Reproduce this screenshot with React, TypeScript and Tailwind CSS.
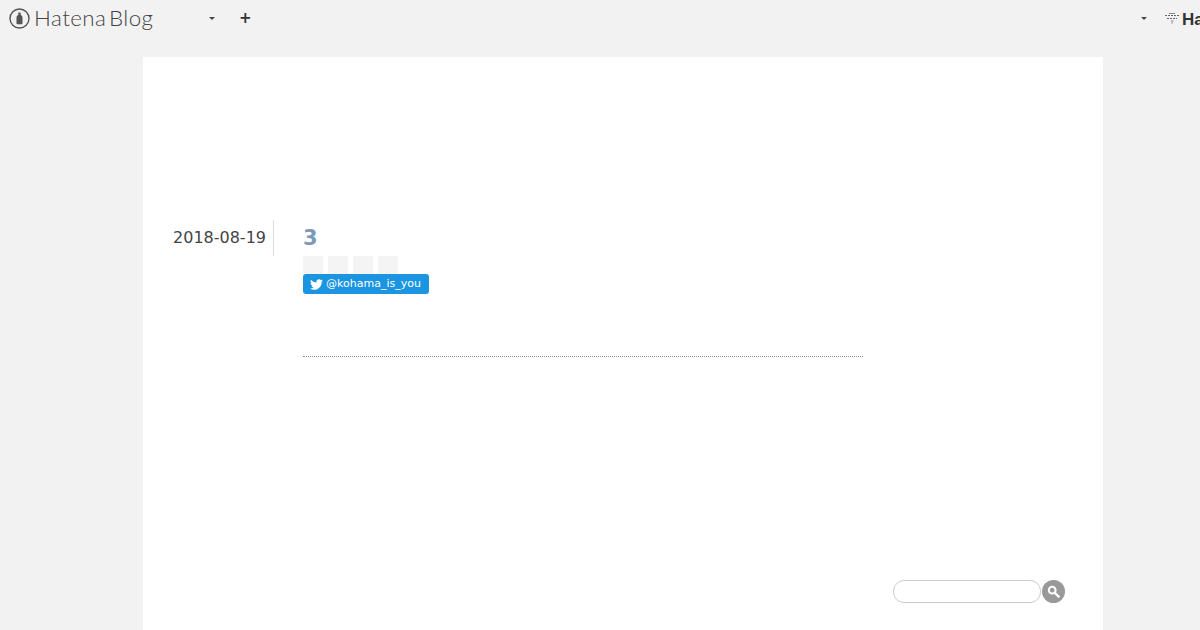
import React from 'react';
import { FaTwitter } from 'react-icons/fa';

const STAR_SLOTS = [0, 1, 2, 3];

function HatenaMark() {
  return (
    <svg width="21" height="21" viewBox="0 0 21 21" className="shrink-0">
      <circle cx="10.5" cy="10.5" r="9.5" fill="none" stroke="#555" strokeWidth="1.4" />
      <path d="M9.3 4.5h2.4v2.2c1.2.8 1.8 1.8 1.8 3v5.8c0 .4-.3.7-.7.7H8.2c-.4 0-.7-.3-.7-.7V9.7c0-1.2.6-2.2 1.8-3z" fill="#555" />
    </svg>
  );
}

function HatenaWave() {
  return (
    <svg width="16" height="12" viewBox="0 0 16 12" className="shrink-0">
      <g stroke="#666" strokeWidth="1" strokeDasharray="2 1" fill="none">
        <path d="M1 3.5h14" />
        <path d="M3 6.5h10" />
      </g>
      <path d="M5 1.5h6M7 9h2.5M7.5 11h1.5" stroke="#888" strokeWidth="1" />
    </svg>
  );
}

function TopBar() {
  return (
    <div className="flex h-[57px] items-start overflow-hidden pt-[8px] pl-[9px]">
      <HatenaMark />
      <span className="ml-[4px] w-[175px] font-['Lato','Liberation_Sans',sans-serif] text-[22.4px] leading-[20px] font-light tracking-[0.45px] text-[#444] [word-spacing:-4px]">
        Hatena Blog
      </span>
      <span className="mt-[9px] h-0 w-0 border-x-[3px] border-t-[3px] border-x-transparent border-t-[#444]" />
      <span className="mt-[-1px] ml-[24px] font-['DejaVu_Sans',sans-serif] text-[15px] leading-[22px] font-bold text-[#333]">+</span>
      <div className="ml-auto flex shrink-0 items-start">
        <span className="mt-[9px] h-0 w-0 border-x-[3px] border-t-[3px] border-x-transparent border-t-[#444]" />
        <span className="mt-[4px] ml-[17px]"><HatenaWave /></span>
        <span className="ml-[2px] w-[18px] overflow-hidden font-['Liberation_Sans',sans-serif] text-[17px] leading-[24px] font-bold whitespace-nowrap text-[#333]">
          Hatena
        </span>
      </div>
    </div>
  );
}

function Entry() {
  return (
    <div className="flex pl-[30px]">
      <div className="flex h-[36px] w-[101px] items-center justify-end border-r border-[#ddd] pr-[7px] text-[16px] whitespace-nowrap text-[#444]">
        2018-08-19
      </div>
      <div className="ml-[29px] w-[560px]">
        <div className="h-[36px] text-[21px] leading-[36px] font-bold text-[#7c9ab8]">3</div>
        <div className="flex gap-[5px]">
          {STAR_SLOTS.map((i) => (
            <span key={i} className="h-[18px] w-[20px] bg-[#f4f4f4]" />
          ))}
        </div>
        <div className="flex h-[20px] w-[126px] items-center rounded-[3px] bg-[#1b95e0] pl-[7px] text-[11px] text-white">
          <FaTwitter className="mr-[3px] text-[13px]" />
          <span>@kohama_is_you</span>
        </div>
        <div className="mt-[62px] border-b border-dotted border-[#888]" />
      </div>
    </div>
  );
}

function SearchBox() {
  return (
    <div className="flex items-center justify-end pr-[38px]">
      <div className="h-[23px] w-[148px] rounded-[11px] border border-[#ccc] bg-white" />
      <div className="ml-[1px] flex h-[23px] w-[23px] items-center justify-center rounded-full bg-[#999]">
        <svg width="13" height="13" viewBox="0 0 13 13">
          <circle cx="5.2" cy="5.2" r="3.4" fill="none" stroke="#fff" strokeWidth="2" />
          <path d="M8 8l3.6 3.6" stroke="#fff" strokeWidth="2.4" strokeLinecap="round" />
        </svg>
      </div>
    </div>
  );
}

export default function App() {
  return (
    <div className="h-[630px] w-[1200px] overflow-hidden bg-[#f2f2f2] font-['DejaVu_Sans',sans-serif]">
      <TopBar />
      <main className="ml-[143px] h-[573px] w-[960px] bg-white pt-[163px]">
        <Entry />
        <div className="mt-[223px]">
          <SearchBox />
        </div>
      </main>
    </div>
  );
}
